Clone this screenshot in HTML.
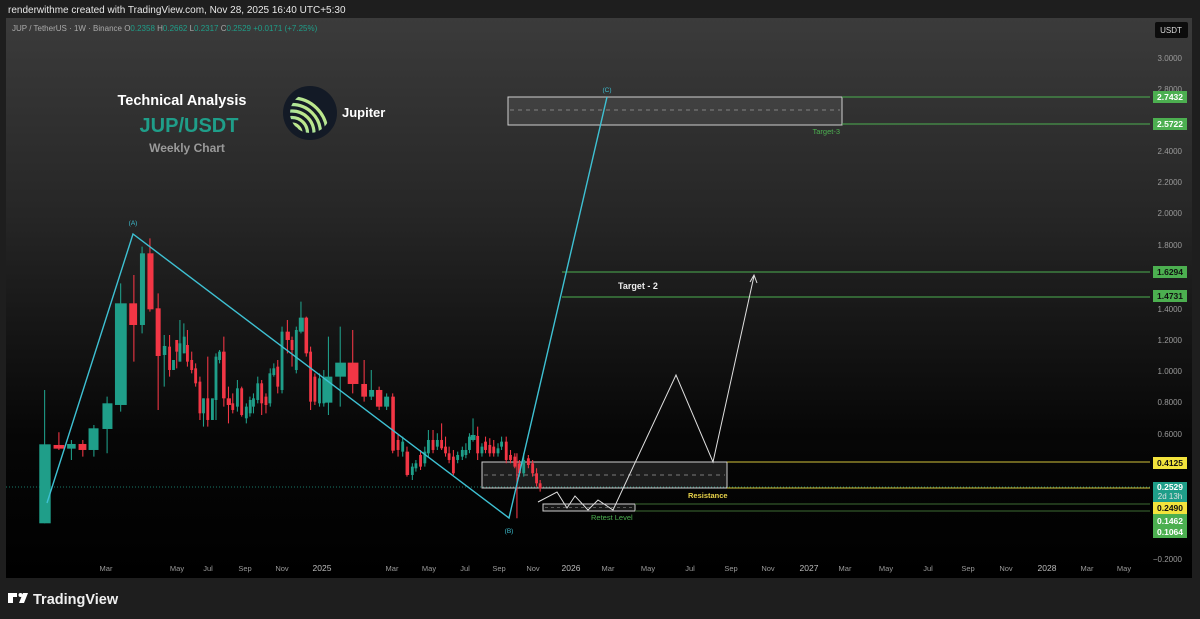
<!DOCTYPE html>
<html><head><meta charset="utf-8">
<style>
html,body{margin:0;padding:0;background:#1e1e1e;width:1200px;height:619px;overflow:hidden;font-family:"Liberation Sans",sans-serif}
svg{position:absolute;left:0;top:0}
</style></head><body>
<svg width="1200" height="619" viewBox="0 0 1200 619" xmlns="http://www.w3.org/2000/svg" font-family="Liberation Sans, sans-serif">
<defs>
<linearGradient id="bg" x1="0" y1="0" x2="0" y2="1">
<stop offset="0" stop-color="#3b3b3b"/><stop offset="0.35" stop-color="#262626"/><stop offset="0.75" stop-color="#060606"/><stop offset="1" stop-color="#000"/>
</linearGradient>
<linearGradient id="arc" x1="0" y1="1" x2="1" y2="0">
<stop offset="0" stop-color="#3bb8d8"/><stop offset="0.5" stop-color="#7fd8b8"/><stop offset="1" stop-color="#d7ee7a"/>
</linearGradient>
<clipPath id="lc"><circle cx="310" cy="113" r="20"/></clipPath>
</defs>
<rect width="1200" height="619" fill="#1e1e1e"/>
<text x="8" y="13" font-size="10" fill="#e8e8e8">renderwithme created with TradingView.com, Nov 28, 2025 16:40 UTC+5:30</text>
<rect x="6" y="18" width="1186" height="560" fill="url(#bg)"/>
<text x="12" y="31" font-size="8" fill="#aaa">JUP / TetherUS · 1W · Binance  O<tspan fill="#1f9e89">0.2358</tspan>  H<tspan fill="#1f9e89">0.2662</tspan>  L<tspan fill="#1f9e89">0.2317</tspan>  C<tspan fill="#1f9e89">0.2529  +0.0171 (+7.25%)</tspan></text>
<rect x="1155" y="22" width="33" height="16" rx="2" fill="#0c0c0c"/>
<text x="1171" y="33" font-size="8" fill="#ddd" text-anchor="middle">USDT</text>

<!-- title -->
<text x="182" y="105" font-size="14.5" font-weight="bold" fill="#fff" text-anchor="middle">Technical Analysis</text>
<text x="189" y="132" font-size="20" font-weight="bold" fill="#1f9e89" text-anchor="middle">JUP/USDT</text>
<text x="187" y="152" font-size="12" font-weight="bold" fill="#9a9a9a" text-anchor="middle">Weekly Chart</text>
<circle cx="310" cy="113" r="27" fill="#131a26"/>
<g fill="none" stroke="url(#arc)" stroke-width="3.2" clip-path="url(#lc)">
<circle cx="292" cy="133" r="9"/><circle cx="292" cy="133" r="15.5"/><circle cx="292" cy="133" r="22"/><circle cx="292" cy="133" r="28.5"/><circle cx="292" cy="133" r="35"/>
</g>
<text x="342" y="117" font-size="13" font-weight="bold" fill="#fff">Jupiter</text>

<!-- price axis labels -->
<g font-size="8" fill="#9a9a9a" text-anchor="end">
<text x="1182" y="61">3.0000</text><text x="1182" y="92">2.8000</text><text x="1182" y="154">2.4000</text><text x="1182" y="185">2.2000</text><text x="1182" y="216">2.0000</text><text x="1182" y="248">1.8000</text><text x="1182" y="312">1.4000</text><text x="1182" y="343">1.2000</text><text x="1182" y="374">1.0000</text><text x="1182" y="405">0.8000</text><text x="1182" y="437">0.6000</text><text x="1182" y="562">−0.2000</text>
</g>
<!-- time axis -->
<g font-size="7.5" fill="#9a9a9a" text-anchor="middle">
<text x="106" y="571">Mar</text><text x="177" y="571">May</text><text x="208" y="571">Jul</text><text x="245" y="571">Sep</text><text x="282" y="571">Nov</text><text x="322" y="571" font-size="8.5" fill="#bbb">2025</text><text x="392" y="571">Mar</text><text x="429" y="571">May</text><text x="465" y="571">Jul</text><text x="499" y="571">Sep</text><text x="533" y="571">Nov</text><text x="571" y="571" font-size="8.5" fill="#bbb">2026</text><text x="608" y="571">Mar</text><text x="648" y="571">May</text><text x="690" y="571">Jul</text><text x="731" y="571">Sep</text><text x="768" y="571">Nov</text><text x="809" y="571" font-size="8.5" fill="#bbb">2027</text><text x="845" y="571">Mar</text><text x="886" y="571">May</text><text x="928" y="571">Jul</text><text x="968" y="571">Sep</text><text x="1006" y="571">Nov</text><text x="1047" y="571" font-size="8.5" fill="#bbb">2028</text><text x="1087" y="571">Mar</text><text x="1124" y="571">May</text>
</g>

<!-- current price dotted -->
<line x1="6" y1="487" x2="1150" y2="487" stroke="#1f9e89" stroke-width="0.8" stroke-dasharray="1 2"/>

<!-- target 3 -->
<rect x="508" y="97" width="334" height="28" fill="rgba(255,255,255,0.07)" stroke="#cfcfcf" stroke-width="1"/>
<line x1="510" y1="110" x2="840" y2="110" stroke="#999" stroke-width="0.7" stroke-dasharray="4 4"/>
<line x1="842" y1="97" x2="1150" y2="97" stroke="#4caf50" stroke-width="1"/>
<line x1="842" y1="124" x2="1150" y2="124" stroke="#4caf50" stroke-width="1"/>
<text x="840" y="134" font-size="7.5" fill="#4caf50" text-anchor="end">Target-3</text>
<!-- target 2 -->
<line x1="562" y1="272" x2="1150" y2="272" stroke="#4caf50" stroke-width="1"/>
<line x1="562" y1="297" x2="1150" y2="297" stroke="#4caf50" stroke-width="1"/>
<text x="618" y="289" font-size="9" font-weight="bold" fill="#eee">Target - 2</text>
<!-- resistance -->
<rect x="482" y="462" width="245" height="26" fill="rgba(255,255,255,0.1)" stroke="#cfcfcf" stroke-width="1"/>
<line x1="484" y1="475" x2="725" y2="475" stroke="#999" stroke-width="0.7" stroke-dasharray="4 4"/>
<line x1="727" y1="462" x2="1150" y2="462" stroke="#d4c43a" stroke-width="1"/>
<line x1="727" y1="488" x2="1150" y2="488" stroke="#d4c43a" stroke-width="1"/>
<text x="688" y="498" font-size="7.5" font-weight="bold" fill="#e8d34a">Resistance</text>
<!-- retest -->
<rect x="543" y="504" width="92" height="7" fill="rgba(255,255,255,0.08)" stroke="#cfcfcf" stroke-width="1"/>
<line x1="545" y1="507.5" x2="633" y2="507.5" stroke="#999" stroke-width="0.6" stroke-dasharray="3 3"/>
<line x1="635" y1="504" x2="1150" y2="504" stroke="#3d6b33" stroke-width="1"/>
<line x1="635" y1="511" x2="1150" y2="511" stroke="#3d6b33" stroke-width="1"/>
<text x="591" y="520" font-size="7.5" fill="#4caf50">Retest Level</text>

<!-- candles -->
<g transform="translate(0,220) scale(0.357,0.3333)">
<g stroke="#1f9e89" stroke-width="3">
<path d="M125 510V910M200 660V720M263 615V710M300 530V700M338 190V575M398 80V340M460 345V500M504 300V425M515 310V400M570 535V620M605 400V600M615 390V430M665 480V575M690 550V610M700 530V590M710 520V580M722 470V550M757 445V560M767 430V470M790 320V520M830 320V460M843 245V340M895 460V560M907 450V560M920 350V585M953 320V560M1040 450V540M1083 520V570M1128 650V710M1155 730V780M1165 720V755M1190 680V740M1200 630V710M1225 640V690M1282 695V730M1295 680V720M1305 670V715M1315 640V700M1325 595V665M1350 670V710M1395 670V710M1405 650V690M1467 700V770"/>
</g>
<g stroke="#f23645" stroke-width="3">
<path d="M165 637V690M232 660V710M375 165V425M420 55V275M443 220V570M475 345V470M495 360V445M525 330V440M537 395V460M548 430V500M560 470V600M582 410V620M627 350V560M640 500V610M652 520V580M677 500V590M733 480V585M745 520V580M778 420V520M805 300V400M818 350V440M858 290V410M870 380V570M882 460V555M988 330V520M1020 420V545M1062 500V570M1100 520V700M1115 645V710M1140 680V770M1178 690V750M1213 630V700M1237 610V690M1248 650V710M1258 680V730M1270 690V765M1338 620V720M1360 650V700M1372 655V710M1383 660V710M1418 650V730M1430 690V730M1442 700V745M1448 700V895M1455 720V770M1480 705V745M1492 720V770M1503 745V800M1513 780V815"/>
</g>
<g fill="#1f9e89">
<rect x="110" y="673" width="32" height="237"/><rect x="188" y="672" width="24" height="14"/><rect x="248" y="625" width="28" height="65"/><rect x="287" y="550" width="28" height="77"/><rect x="322" y="250" width="33" height="305"/><rect x="392" y="100" width="14" height="215"/><rect x="456" y="378" width="10" height="27"/><rect x="482" y="420" width="8" height="30"/><rect x="500" y="370" width="8" height="55"/><rect x="512" y="350" width="8" height="50"/><rect x="566" y="535" width="8" height="45"/><rect x="591" y="535" width="8" height="65"/><rect x="601" y="410" width="8" height="130"/><rect x="611" y="395" width="8" height="25"/><rect x="661" y="505" width="8" height="55"/><rect x="686" y="560" width="8" height="35"/><rect x="697" y="540" width="8" height="40"/><rect x="706" y="535" width="8" height="25"/><rect x="718" y="490" width="8" height="50"/><rect x="752" y="460" width="8" height="90"/><rect x="763" y="445" width="8" height="20"/><rect x="786" y="335" width="8" height="175"/><rect x="826" y="330" width="8" height="120"/><rect x="837" y="293" width="14" height="42"/><rect x="891" y="475" width="8" height="75"/><rect x="903" y="475" width="8" height="75"/><rect x="909" y="470" width="22" height="78"/><rect x="939" y="428" width="30" height="42"/><rect x="1034" y="510" width="14" height="20"/><rect x="1076" y="530" width="14" height="30"/><rect x="1124" y="665" width="8" height="30"/><rect x="1151" y="740" width="8" height="25"/><rect x="1161" y="730" width="8" height="15"/><rect x="1186" y="695" width="8" height="35"/><rect x="1196" y="660" width="8" height="40"/><rect x="1221" y="660" width="8" height="20"/><rect x="1278" y="705" width="8" height="15"/><rect x="1291" y="690" width="8" height="20"/><rect x="1301" y="690" width="8" height="15"/><rect x="1311" y="650" width="8" height="40"/><rect x="1318" y="645" width="14" height="15"/><rect x="1346" y="680" width="8" height="20"/><rect x="1391" y="685" width="8" height="15"/><rect x="1401" y="665" width="8" height="15"/><rect x="1463" y="720" width="8" height="40"/>
</g>
<g fill="#f23645">
<rect x="150" y="675" width="30" height="11"/><rect x="220" y="672" width="22" height="18"/><rect x="362" y="250" width="22" height="65"/><rect x="413" y="100" width="17" height="168"/><rect x="436" y="265" width="14" height="143"/><rect x="471" y="380" width="8" height="70"/><rect x="491" y="360" width="8" height="35"/><rect x="521" y="375" width="8" height="50"/><rect x="533" y="420" width="8" height="30"/><rect x="544" y="445" width="8" height="45"/><rect x="556" y="485" width="8" height="95"/><rect x="578" y="535" width="8" height="65"/><rect x="622" y="395" width="10" height="140"/><rect x="635" y="535" width="12" height="20"/><rect x="648" y="550" width="8" height="20"/><rect x="673" y="505" width="8" height="80"/><rect x="729" y="490" width="8" height="60"/><rect x="741" y="530" width="8" height="25"/><rect x="774" y="440" width="8" height="60"/><rect x="800" y="335" width="12" height="25"/><rect x="814" y="360" width="8" height="30"/><rect x="853" y="293" width="10" height="107"/><rect x="866" y="395" width="8" height="150"/><rect x="878" y="470" width="8" height="75"/><rect x="974" y="428" width="30" height="64"/><rect x="1012" y="492" width="16" height="38"/><rect x="1053" y="510" width="18" height="50"/><rect x="1096" y="530" width="10" height="162"/><rect x="1111" y="660" width="8" height="30"/><rect x="1136" y="695" width="10" height="70"/><rect x="1174" y="705" width="8" height="35"/><rect x="1209" y="660" width="8" height="30"/><rect x="1233" y="660" width="8" height="25"/><rect x="1244" y="680" width="8" height="20"/><rect x="1254" y="700" width="8" height="20"/><rect x="1266" y="710" width="8" height="50"/><rect x="1334" y="648" width="8" height="52"/><rect x="1356" y="665" width="8" height="25"/><rect x="1368" y="675" width="8" height="25"/><rect x="1379" y="680" width="8" height="20"/><rect x="1414" y="665" width="8" height="55"/><rect x="1426" y="705" width="8" height="15"/><rect x="1438" y="710" width="8" height="30"/><rect x="1451" y="730" width="8" height="30"/><rect x="1476" y="715" width="8" height="20"/><rect x="1488" y="730" width="8" height="30"/><rect x="1499" y="760" width="8" height="30"/><rect x="1509" y="790" width="8" height="15"/>
</g>
</g>

<!-- elliott waves -->
<polyline points="47,503 133,234 509,518 607,97" fill="none" stroke="#3ec1d3" stroke-width="1.4"/>
<g font-size="6.5" fill="#3ec1d3" text-anchor="middle">
<text x="133" y="225">(A)</text><text x="509" y="533">(B)</text><text x="607" y="92">(C)</text>
</g>
<!-- projection path -->
<polyline points="538,502 557,492 567,508 575,496 588,510 598,500 613,510 676,375 713,462 754,276" fill="none" stroke="#e0e0e0" stroke-width="1"/>
<path d="M750 282 L754 275 L757 283" fill="none" stroke="#e0e0e0" stroke-width="1"/>

<!-- price badges -->
<g font-size="8.5" font-weight="bold" text-anchor="middle">
<rect x="1153" y="91" width="34" height="12" fill="#4caf50"/><text x="1170" y="100" fill="#fff">2.7432</text>
<rect x="1153" y="118" width="34" height="12" fill="#4caf50"/><text x="1170" y="127" fill="#fff">2.5722</text>
<rect x="1153" y="266" width="34" height="12" fill="#4caf50"/><text x="1170" y="275" fill="#111">1.6294</text>
<rect x="1153" y="290" width="34" height="12" fill="#4caf50"/><text x="1170" y="299" fill="#111">1.4731</text>
<rect x="1153" y="457" width="34" height="12" fill="#f2e33c"/><text x="1170" y="466" fill="#111">0.4125</text>
<rect x="1153" y="482" width="34" height="20" fill="#1f9e89"/><text x="1170" y="490" fill="#fff">0.2529</text><text x="1170" y="499" fill="#e0e0e0" font-weight="normal" font-size="8">2d 13h</text>
<rect x="1153" y="502" width="34" height="12" fill="#f2e33c"/><text x="1170" y="511" fill="#111">0.2490</text>
<rect x="1153" y="514" width="34" height="24" fill="#4caf50"/><text x="1170" y="524" fill="#fff">0.1462</text><text x="1170" y="535" fill="#fff">0.1064</text>
</g>

<!-- footer logo -->
<g fill="#fff">
<path d="M8 593h9v4h-4v6h-5v-6z"/>
<circle cx="20.5" cy="595" r="2"/>
<path d="M23 593h5l-4 10h-5z"/>
</g>
<text x="33" y="604" font-size="14.5" font-weight="bold" fill="#f0f0f0">TradingView</text>
</svg>
</body></html>
